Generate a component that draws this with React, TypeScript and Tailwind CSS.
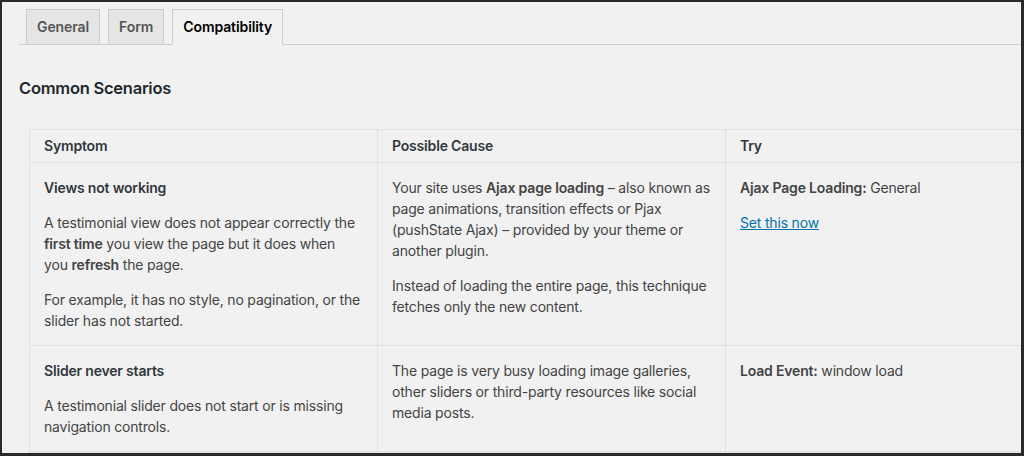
const font = { fontFamily: "Inter, 'Noto Sans', 'Liberation Sans', sans-serif" }

const tabs = [
  { label: "General", active: false },
  { label: "Form", active: false },
  { label: "Compatibility", active: true },
]

function Cell({ children, last }: { children: React.ReactNode; last?: boolean }) {
  return (
    <div
      className={
        "pl-[14px] pr-[15px] pt-[14px] pb-[14px] flex flex-col gap-[14px] " +
        (last ? "" : "border-r border-dotted border-[#d4d4d4]")
      }
    >
      {children}
    </div>
  )
}

export default function App() {
  return (
    <div
      style={font}
      className="w-[1024px] h-[456px] overflow-hidden bg-[#f1f1f1] border-l-2 border-t-2 border-r-[3px] border-b-[3px] border-[#2a2a2a] text-[14px] leading-[21px] tracking-[-0.18px] text-[#444]"
    >
      <div className="ml-[17px] mt-[7px] pl-[7px] flex items-end gap-[8px] border-b border-[#ccc]">
        {tabs.map((t) => (
          <div
            key={t.label}
            className={
              "-mb-px px-[10px] pt-[5px] pb-[6px] border border-[#ccc] font-semibold text-[14px] leading-[23px] tracking-[-0.1px] " +
              (t.active
                ? "bg-[#f1f1f1] border-b-[#f1f1f1] text-[#000]"
                : "bg-[#e5e5e5] text-[#555]")
            }
          >
            {t.label}
          </div>
        ))}
      </div>

      <h2 className="ml-[17px] mt-[32px] text-[16.5px] leading-[22px] tracking-[-0.25px] font-semibold text-[#23282d]">
        Common Scenarios
      </h2>

      <div className="ml-[27px] mt-[30px] w-[1046px] border border-[#e1e1e1]">
        <div className="grid grid-cols-[348px_348px_348px] border-b border-[#e1e1e1] font-semibold text-[#32373c]">
          <div className="px-[14px] pt-[5px] pb-[6px] border-r border-dotted border-[#d4d4d4]">Symptom</div>
          <div className="px-[14px] pt-[5px] pb-[6px] border-r border-dotted border-[#d4d4d4]">Possible Cause</div>
          <div className="px-[14px] pt-[5px] pb-[6px]">Try</div>
        </div>

        <div className="grid grid-cols-[348px_348px_348px] border-b border-[#e1e1e1]">
          <Cell>
            <p className="font-semibold text-[#32373c]">Views not working</p>
            <p>
              A testimonial view does not appear correctly the <strong className="font-semibold">first time</strong> you
              view the page but it does when you <strong className="font-semibold">refresh</strong> the page.
            </p>
            <p>For example, it has no style, no pagination, or the slider has not started.</p>
          </Cell>
          <Cell>
            <p>
              Your site uses <strong className="font-semibold">Ajax page loading</strong> – also known as page
              animations, transition effects or Pjax (pushState Ajax) – provided by your theme or another plugin.
            </p>
            <p>Instead of loading the entire page, this technique fetches only the new content.</p>
          </Cell>
          <Cell last>
            <p>
              <strong className="font-semibold">Ajax Page Loading:</strong> General
            </p>
            <p>
              <a href="#" className="text-[#0073aa] underline">
                Set this now
              </a>
            </p>
          </Cell>
        </div>

        <div className="grid grid-cols-[348px_348px_348px] border-b border-[#e1e1e1]">
          <Cell>
            <p className="font-semibold text-[#32373c]">Slider never starts</p>
            <p>A testimonial slider does not start or is missing navigation controls.</p>
          </Cell>
          <Cell>
            <p>
              The page is very busy loading image galleries, other sliders or third-party resources like social
              media posts.
            </p>
          </Cell>
          <Cell last>
            <p>
              <strong className="font-semibold">Load Event:</strong> window load
            </p>
          </Cell>
        </div>
      </div>
    </div>
  )
}
